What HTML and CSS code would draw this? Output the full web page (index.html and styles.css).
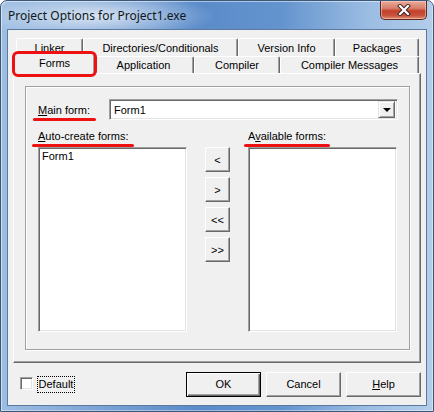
FILE: index.html
```html
<!DOCTYPE html>
<html>
<head>
<meta charset="utf-8">
<link rel="stylesheet" href="styles.css">
</head>
<body>
<div class="window">
  <div class="titlebar">
    <span class="title">Project Options for Project1.exe</span>
    <div class="close">
      <svg width="14" height="12" viewBox="0 0 14 12">
        <path d="M3 2 L11 10 M11 2 L3 10" stroke="#3a2020" stroke-width="4" stroke-linecap="square" fill="none"/>
        <path d="M3 2 L11 10 M11 2 L3 10" stroke="#ffffff" stroke-width="2.2" stroke-linecap="square" fill="none"/>
      </svg>
    </div>
  </div>
  <div class="client">
    <div class="tabctl">
      <div class="tabrow back">
        <div class="tab t-linker">Linker</div>
        <div class="tab t-dirs">Directories/Conditionals</div>
        <div class="tab t-version">Version Info</div>
        <div class="tab t-packages">Packages</div>
      </div>
      <div class="tabrow front">
        <div class="tab selected t-forms">Forms</div>
        <div class="tab t-app">Application</div>
        <div class="tab t-compiler">Compiler</div>
        <div class="tab t-messages">Compiler Messages</div>
      </div>
      <div class="panel">
        <div class="group">
          <div class="mainrow">
            <span class="lbl mainlbl mark"><u>M</u>ain form:</span>
            <div class="combo">
              <span class="combotext">Form1</span>
              <span class="dropbtn"><span class="tri"></span></span>
            </div>
          </div>
          <div class="lists">
            <div class="col">
              <span class="lbl collbl mark"><u>A</u>uto-create forms:</span>
              <div class="listbox"><div class="item">Form1</div></div>
            </div>
            <div class="btncol">
              <div class="btn small">&lt;</div>
              <div class="btn small">&gt;</div>
              <div class="btn small">&lt;&lt;</div>
              <div class="btn small">&gt;&gt;</div>
            </div>
            <div class="col">
              <span class="lbl collbl mark">A<u>v</u>ailable forms:</span>
              <div class="listbox"></div>
            </div>
          </div>
        </div>
      </div>
    </div>
    <div class="footer">
      <span class="check"></span>
      <span class="focuslbl">Default</span>
      <div class="btns">
        <div class="btn big default">OK</div>
        <div class="btn big">Cancel</div>
        <div class="btn big"><u>H</u>elp</div>
      </div>
    </div>
  </div>
</div>
</body>
</html>
```

FILE: styles.css
```css
* { box-sizing: border-box; }
html, body { margin: 0; padding: 0; }
body {
  width: 434px;
  height: 412px;
  overflow: hidden;
  background: #ffffff;
  font-family: "Liberation Sans", Arial, sans-serif;
  font-size: 11px;
  color: #000;
}
u { text-decoration: underline; text-underline-offset: 1px; }

.window {
  width: 434px;
  height: 412px;
  display: flex;
  flex-direction: column;
  padding: 0 6px 5px 6px;
  border: 1px solid #3b5879;
  border-radius: 7px 7px 0 0;
  background:
    radial-gradient(ellipse 120px 24px at 95px 15px, rgba(255,255,255,0.7), rgba(255,255,255,0) 100%),
    linear-gradient(90deg, #9dbde2 0%, #7ea6d6 20%, #5a8bca 45%, #6494ce 65%, #9bbde3 85%, #b3cdea 100%);
  box-shadow: inset 1px 1px 0 rgba(255,255,255,0.5), inset -1px -1px 0 rgba(255,255,255,0.4);
}

.titlebar {
  height: 28px;
  display: flex;
  align-items: center;
}
.title {
  font-family: "Noto Sans", "Open Sans", sans-serif;
  font-size: 12px;
  color: #101820;
  padding-left: 1px;
  margin-top: 1px;
}
.close {
  margin-left: auto;
  align-self: flex-start;
  width: 47px;
  height: 19px;
  border: 1px solid #5a2a22;
  border-top: none;
  border-radius: 0 0 5px 5px;
  background: linear-gradient(180deg, #e9a99a 0%, #d8806c 40%, #c2402a 55%, #c8533c 80%, #e08a70 100%);
  box-shadow: inset 0 0 0 1px rgba(255,220,210,0.5);
  display: flex;
  align-items: center;
  justify-content: center;
}

.client {
  flex: 1;
  display: flex;
  flex-direction: column;
  background: #f0f0f0;
  border: 1px solid #5c7aa0;
  padding: 8px 5px 0 5px;
}

.tabctl { display: flex; flex-direction: column; }
.tabrow { display: flex; padding-left: 3px; }
.tabrow.back { height: 18px; }
.tabrow.front { height: 17px; align-items: flex-end; }

.tab {
  height: 100%;
  background: #f0f0f0;
  border-top: 1px solid #ffffff;
  border-left: 1px solid #ffffff;
  border-right: 1px solid #696969;
  box-shadow: inset -1px 0 0 #a0a0a0;
  border-radius: 2px 2px 0 0;
  display: flex;
  align-items: center;
  justify-content: center;
  white-space: nowrap;
}
.t-linker { width: 67px; }
.t-dirs { width: 155px; }
.t-version { width: 97px; }
.t-packages { width: 84px; }
.t-forms { width: 77px; }
.t-app { width: 101px; }
.t-compiler { width: 86px; }
.t-messages { width: 139px; }

.tab.selected {
  width: 81px;
  height: 21px;
  margin: 0 -2px -1px -2px;
  padding-bottom: 3px;
  position: relative;
  z-index: 2;
}
.tab.selected::after {
  content: "";
  position: absolute;
  left: -3px;
  top: -3px;
  right: -3px;
  bottom: -3px;
  border: 3px solid #ee1111;
  border-radius: 6px;
}

.panel {
  width: 408px;
  height: 290px;
  display: flex;
  flex-direction: column;
  border: 1px solid;
  border-color: #ffffff #696969 #696969 #ffffff;
  box-shadow: inset -1px -1px 0 #a0a0a0;
  padding: 12px 10px 12px 11px;
}

.group {
  flex: 1;
  border: 1px solid #a0a0a0;
  box-shadow: inset 1px 1px 0 #ffffff, 1px 1px 0 #ffffff;
  padding: 12px 11px 0 12px;
}

.lbl { position: relative; white-space: nowrap; }
.mark::after {
  content: "";
  position: absolute;
  left: -5px;
  right: -5px;
  height: 3px;
  background: #ee1111;
  border-radius: 2px;
}
.mainlbl::after { bottom: -5px; }

.mainrow { display: flex; align-items: center; height: 21px; }
.mainlbl { width: 71px; }
.mainlbl::after { right: auto; width: 63px; }

.combo, .listbox, .check {
  background: #ffffff;
  border: 1px solid;
  border-color: #a0a0a0 #ffffff #ffffff #a0a0a0;
  box-shadow: inset 1px 1px 0 #696969, inset -1px -1px 0 #e3e3e3;
}
.combo {
  width: 289px;
  height: 21px;
  display: flex;
  align-items: center;
  padding: 2px;
}
.combotext { padding-left: 2px; }
.dropbtn {
  margin-left: auto;
  width: 17px;
  height: 17px;
  background: #f0f0f0;
  border: 1px solid;
  border-color: #e3e3e3 #696969 #696969 #e3e3e3;
  box-shadow: inset 1px 1px 0 #ffffff, inset -1px -1px 0 #a0a0a0;
  display: flex;
  align-items: center;
  justify-content: center;
}
.tri {
  width: 0;
  height: 0;
  border-left: 4px solid transparent;
  border-right: 4px solid transparent;
  border-top: 4px solid #000;
  margin-top: 1px;
}

.lists { display: flex; margin-top: 10px; gap: 18px; }
.col { display: flex; flex-direction: column; width: 149px; }
.collbl { height: 13px; line-height: 13px; margin-bottom: 4px; }
.collbl.mark::after { bottom: -4px; }
.col:first-child .collbl::after { left: -6px; right: auto; width: 102px; }
.col:last-child .collbl::after { left: -4px; right: auto; width: 86px; }
.listbox { width: 149px; height: 185px; padding: 2px; }
.item { padding-left: 1px; line-height: 13px; }

.btncol {
  display: flex;
  flex-direction: column;
  gap: 5px;
  padding-top: 17px;
  width: 25px;
}

.btn {
  background: #f0f0f0;
  border: 1px solid;
  border-color: #ffffff #696969 #696969 #ffffff;
  box-shadow: inset -1px -1px 0 #a0a0a0;
  display: flex;
  align-items: center;
  justify-content: center;
  white-space: nowrap;
}
.btn.small { width: 25px; height: 25px; }
.btn.big { width: 75px; height: 25px; }
.btn.default {
  border: 1px solid #000;
  box-shadow: inset 1px 1px 0 #ffffff, inset -1px -1px 0 #696969, inset -2px -2px 0 #a0a0a0;
}

.footer {
  flex: 1;
  display: flex;
  align-items: center;
  padding: 0 0 0 7px;
}
.check { width: 13px; height: 13px; margin-top: -1px; }
.focuslbl {
  margin-left: 4px;
  border: 1px dotted #000;
  padding: 1px 0 1px 0;
  width: 38px;
  line-height: 13px;
  text-align: center;
}
.btns { margin-left: auto; display: flex; gap: 5px; }
```
